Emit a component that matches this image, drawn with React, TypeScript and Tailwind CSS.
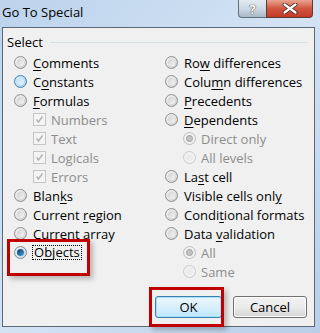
import React from 'react';

type RadioState = 'normal' | 'hover' | 'checked' | 'disabled' | 'disabledChecked';

const Radio = ({ state = 'normal' }: { state?: RadioState }) => {
  if (state === 'hover') {
    return (
      <span className="flex h-[13px] w-[13px] shrink-0 items-center justify-center rounded-full border border-[#3c7fb1] bg-gradient-to-br from-[#dcecfc] to-[#a7d1ef]">
        <span className="h-[7px] w-[7px] rounded-full bg-gradient-to-br from-[#bfe0f6] to-[#e9f5fd]" />
      </span>
    );
  }
  if (state === 'checked') {
    return (
      <span className="flex h-[13px] w-[13px] shrink-0 items-center justify-center rounded-full border border-[#7f8c96] bg-gradient-to-br from-[#eef0f2] to-[#d2d6da]">
        <span className="h-[7px] w-[7px] rounded-full bg-gradient-to-br from-[#0c3b66] to-[#3fa6e6]" />
      </span>
    );
  }
  if (state === 'disabled') {
    return (
      <span className="flex h-[13px] w-[13px] shrink-0 items-center justify-center rounded-full border border-[#cacaca] bg-[#f1f1f1]">
        <span className="h-[7px] w-[7px] rounded-full bg-[#ececec]" />
      </span>
    );
  }
  if (state === 'disabledChecked') {
    return (
      <span className="flex h-[13px] w-[13px] shrink-0 items-center justify-center rounded-full border border-[#bdbdbd] bg-[#f1f1f1]">
        <span className="h-[7px] w-[7px] rounded-full border border-[#9e9e9e] bg-[#c4c4c4]" />
      </span>
    );
  }
  return (
    <span className="flex h-[13px] w-[13px] shrink-0 items-center justify-center rounded-full border border-[#8e8f8f] bg-gradient-to-br from-[#f4f4f4] to-[#cfcfcf]">
      <span className="h-[7px] w-[7px] rounded-full bg-gradient-to-br from-[#d0d0d0] to-[#f6f6f6]" />
    </span>
  );
};

const Check = () => (
  <span className="flex h-[13px] w-[13px] shrink-0 items-center justify-center border border-[#c5c5c5] bg-[#f4f4f4]">
    <svg width="9" height="9" viewBox="0 0 9 9">
      <path d="M1.5 4.5 L3.5 7 L7.5 1.5" fill="none" stroke="#b3b3b3" strokeWidth="1.4" />
    </svg>
  </span>
);

const Row = ({ children }: { children: React.ReactNode }) => (
  <div className="flex h-[19px] items-center">{children}</div>
);

const Item = ({ radio, children }: { radio: RadioState; children: React.ReactNode }) => (
  <>
    <Radio state={radio} />
    <span className="ml-[6px] text-black">{children}</span>
  </>
);

const SubCheck = ({ label }: { label: string }) => (
  <div className="flex h-[19px] items-center pl-[19px]">
    <Check />
    <span className="ml-[5px] text-[#8d8d8d]">{label}</span>
  </div>
);

const SubRadio = ({ label, checked }: { label: string; checked?: boolean }) => (
  <div className="flex h-[19px] items-center pl-[18px]">
    <Radio state={checked ? 'disabledChecked' : 'disabled'} />
    <span className="ml-[5px] text-[#8d8d8d]">{label}</span>
  </div>
);

export default function App() {
  return (
    <div className="relative h-[333px] w-[320px] overflow-hidden bg-gradient-to-br from-[#bcd3ec] via-[#d3e3f4] to-[#b8cfe8] font-['Open_Sans',sans-serif] text-[13px] leading-[16px] [&_u]:underline-offset-[2px]">
      {/* title bar */}
      <div className="flex h-[27px] items-start justify-between">
        <div className="pl-[2px] pt-[4px] text-black">Go To Special</div>
        <div className="mr-[7px] flex h-[18px]">
          <div className="flex w-[28px] items-center justify-center rounded-bl-[4px] border border-r-0 border-t-0 border-[#5f6f80] bg-gradient-to-b from-[#e3eaf1] via-[#cfd9e3] to-[#a9b8c7] text-[13px] font-bold text-white [text-shadow:0_0_1px_#333,0_0_1px_#333]">
            ?
          </div>
          <div className="flex w-[47px] items-center justify-center rounded-br-[4px] border border-t-0 border-[#5f3b34] bg-gradient-to-b from-[#e9a493] via-[#d0553f] to-[#c23a26]">
            <svg width="16" height="11" viewBox="0 0 16 11">
              <path d="M2.5 1.5 L13.5 9.5 M13.5 1.5 L2.5 9.5" stroke="#4a2a24" strokeWidth="4" strokeLinecap="round" />
              <path d="M2.5 1.5 L13.5 9.5 M13.5 1.5 L2.5 9.5" stroke="#ffffff" strokeWidth="2.2" strokeLinecap="round" />
            </svg>
          </div>
        </div>
      </div>

      {/* client area */}
      <div className="ml-[2px] h-[300px] w-[313px] border border-[#5a6878] bg-[#f0f0f0]">
        <div className="flex items-center pl-[4px] pr-[6px] pt-[6px]">
          <span>Select</span>
          <span className="ml-[7px] h-px flex-1 bg-[#d5dfe6]" />
        </div>

        <div className="mt-[3px] grid grid-cols-[151px_1fr] pl-[11px]">
          <div>
            <Row><Item radio="normal"><u>C</u>omments</Item></Row>
            <Row><Item radio="hover">C<u>o</u>nstants</Item></Row>
            <Row><Item radio="normal"><u>F</u>ormulas</Item></Row>
            <SubCheck label="Numbers" />
            <SubCheck label="Text" />
            <SubCheck label="Logicals" />
            <SubCheck label="Errors" />
            <Row><Item radio="normal">Blan<u>k</u>s</Item></Row>
            <Row><Item radio="normal">Current <u>r</u>egion</Item></Row>
            <Row><Item radio="normal">Current <u>a</u>rray</Item></Row>
            <Row>
              <Radio state="checked" />
              <span className="ml-[5px] border border-dotted border-black px-px leading-[13px]">
                O<u>b</u>jects
              </span>
            </Row>
          </div>
          <div>
            <Row><Item radio="normal">Ro<u>w</u> differences</Item></Row>
            <Row><Item radio="normal">Colu<u>m</u>n differences</Item></Row>
            <Row><Item radio="normal"><u>P</u>recedents</Item></Row>
            <Row><Item radio="normal"><u>D</u>ependents</Item></Row>
            <SubRadio label="Direct only" checked />
            <SubRadio label="All levels" />
            <Row><Item radio="normal">La<u>s</u>t cell</Item></Row>
            <Row><Item radio="normal">Visible cells onl<u>y</u></Item></Row>
            <Row><Item radio="normal">Condi<u>t</u>ional formats</Item></Row>
            <Row><Item radio="normal">Data <u>v</u>alidation</Item></Row>
            <SubRadio label="All" checked />
            <SubRadio label="Same" />
          </div>
        </div>

        <div className="mt-[15px] flex justify-end gap-[11px] pr-[7px]">
          <button className="h-[22px] w-[67px] rounded-[3px] border border-[#3c7fb1] bg-gradient-to-b from-[#eaf6fd] via-[#d9f0fc] to-[#bee6fd] text-black shadow-[inset_0_0_0_1px_#a6e0fb]">
            OK
          </button>
          <button className="h-[22px] w-[74px] rounded-[3px] border border-[#707070] bg-gradient-to-b from-[#f2f2f2] via-[#ebebeb] to-[#d6d6d6] text-black shadow-[inset_0_0_0_1px_#fcfcfc]">
            Cancel
          </button>
        </div>
      </div>

      {/* annotation highlights */}
      <div className="absolute left-[7px] top-[239px] h-[37px] w-[83px] border-[3px] border-[#c00000] shadow-[3px_3px_5px_rgba(0,0,0,0.25)]" />
      <div className="absolute left-[149px] top-[287px] h-[40px] w-[75px] border-[3px] border-[#c00000] shadow-[3px_3px_5px_rgba(0,0,0,0.25)]" />
    </div>
  );
}
